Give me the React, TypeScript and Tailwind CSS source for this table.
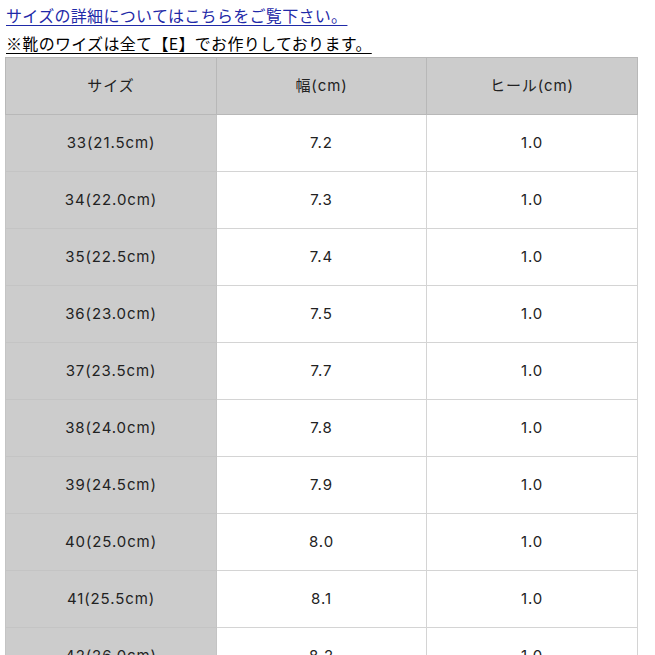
const rows = [
  ["33(21.5cm)", "7.2", "1.0"],
  ["34(22.0cm)", "7.3", "1.0"],
  ["35(22.5cm)", "7.4", "1.0"],
  ["36(23.0cm)", "7.5", "1.0"],
  ["37(23.5cm)", "7.7", "1.0"],
  ["38(24.0cm)", "7.8", "1.0"],
  ["39(24.5cm)", "7.9", "1.0"],
  ["40(25.0cm)", "8.0", "1.0"],
  ["41(25.5cm)", "8.1", "1.0"],
  ["42(26.0cm)", "8.2", "1.0"],
];

const font = { fontFamily: '"Inter", "Noto Sans CJK JP", sans-serif' };

export default function App() {
  return (
    <div className="h-[655px] w-[655px] overflow-hidden bg-white">
      <div className="px-[6px] pt-[1px] font-['Noto_Sans_CJK_JP',sans-serif] text-[16px] tracking-[0.02em] leading-[28px]">
        <a href="#" className="text-[#1f2aa8] underline underline-offset-[3px]">
          サイズの詳細についてはこちらをご覧下さい。
        </a>
        <div className="text-black underline underline-offset-[3px]">
          ※靴のワイズは全て【E】でお作りしております。
        </div>
      </div>
      <table
        className="ml-[5px] w-[632px] table-fixed border-collapse text-[15px] tracking-[0.06em] text-[#222]"
        style={font}
      >
        <colgroup>
          <col className="w-[211px]" />
          <col className="w-[210px]" />
          <col className="w-[211px]" />
        </colgroup>
        <thead>
          <tr className="h-[57px] bg-[#cccccc]">
            <th className="border border-[#b8b8b8] font-normal">サイズ</th>
            <th className="border border-[#b8b8b8] font-normal">幅(cm)</th>
            <th className="border border-[#b8b8b8] font-normal">ヒール(cm)</th>
          </tr>
        </thead>
        <tbody>
          {rows.map((r) => (
            <tr key={r[0]} className="h-[57px]">
              <td className="border border-[#c4c4c4] bg-[#cccccc] text-center">{r[0]}</td>
              <td className="border border-[#d4d4d4] text-center">{r[1]}</td>
              <td className="border border-[#d4d4d4] text-center">{r[2]}</td>
            </tr>
          ))}
        </tbody>
      </table>
    </div>
  );
}
